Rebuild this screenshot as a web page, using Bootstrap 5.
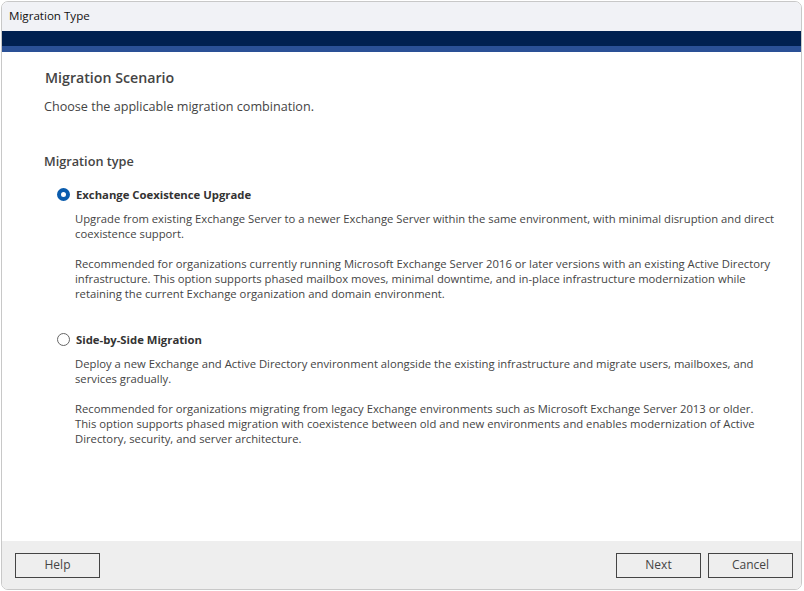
<!DOCTYPE html>
<html lang="en">
<head>
  <meta charset="UTF-8" />
  <meta name="viewport" content="width=device-width, initial-scale=1.0" />
  <title>Migration Type</title>
  <link href="https://cdn.jsdelivr.net/npm/bootstrap@5.3.3/dist/css/bootstrap.min.css" rel="stylesheet">
  <style>
    html, body { height: 100%; }
    body { background: #fff; font-family: "Open Sans", "Noto Sans", sans-serif; color: #444; overflow: hidden; padding: 1px 0 0 1px; }
    .wiz-window { width: 801px; height: 589px; border: 1px solid #c8c8c8; border-radius: 7px; overflow: hidden; }
    .wiz-title { height: 29px; background: #f1f2f6; padding: 0 0 2px 7px; font-size: 11.6px; color: #111; }
    .wiz-band { height: 15px; background: #002050; flex-shrink: 0; }
    .wiz-band2 { height: 6px; background: #2a5096; flex-shrink: 0; }
    .wiz-body { padding: 16px 24px 0 42px; }
    .wiz-heading { font-size: 14.2px; font-weight: 600; margin: 0 0 0 1px; line-height: 20px; color: #444; }
    .wiz-sub { font-size: 12.6px; margin: 10px 0 0; line-height: 18px; }
    .wiz-group { font-size: 12.7px; font-weight: 600; margin: 36px 0 0; line-height: 18px; }
    .wiz-opt { position: relative; padding-left: 31px; }
    .wiz-opt-first { margin-top: 17px; }
    .wiz-opt-second { margin-top: 31px; }
    .wiz-opt-title { font-size: 11.3px; font-weight: 700; line-height: 16px; color: #333; padding-left: 1px; }
    .wiz-opt p { font-size: 11.28px; line-height: 15px; margin: 0; }
    .wiz-opt .wiz-para2 { margin-top: 15px; }
    .wiz-radio { width: 13px; height: 13px; border-radius: 50%; border: 1px solid #666; background: #fff; position: absolute; left: 13px; top: 1px; margin: 0; }
    .wiz-radio.is-on { border: 4px solid #0b5cad; }
    .wiz-foot { height: 48px; background: #eee; padding: 0 8px 0 13px; flex-shrink: 0; }
    .wiz-btn { height: 25px; width: 85px; border: 1px solid #444; background: #eee; font-size: 12px; color: #444; padding: 0; border-radius: 0; }
    .wiz-btns { gap: 7px; }
  </style>
</head>
<body>
<div class="wiz-window d-flex flex-column">
  <div class="wiz-title d-flex align-items-center flex-shrink-0">Migration Type</div>
  <div class="wiz-band"></div>
  <div class="wiz-band2"></div>

  <div class="wiz-body flex-grow-1">
    <h1 class="wiz-heading">Migration Scenario</h1>
    <p class="wiz-sub">Choose the applicable migration combination.</p>
    <p class="wiz-group">Migration type</p>

    <div class="wiz-opt wiz-opt-first">
      <span class="wiz-radio is-on"></span>
      <div class="wiz-opt-title">Exchange Coexistence Upgrade</div>
      <p class="mt-2">Upgrade from existing Exchange Server to a newer Exchange Server within the same environment, with minimal disruption and direct coexistence support.</p>
      <p class="wiz-para2">Recommended for organizations currently running Microsoft Exchange Server 2016 or later versions with an existing Active Directory infrastructure. This option supports phased mailbox moves, minimal downtime, and in-place infrastructure modernization while retaining the current Exchange organization and domain environment.</p>
    </div>

    <div class="wiz-opt wiz-opt-second">
      <span class="wiz-radio"></span>
      <div class="wiz-opt-title">Side-by-Side Migration</div>
      <p class="mt-2">Deploy a new Exchange and Active Directory environment alongside the existing infrastructure and migrate users, mailboxes, and services gradually.</p>
      <p class="wiz-para2">Recommended for organizations migrating from legacy Exchange environments such as Microsoft Exchange Server 2013 or older. This option supports phased migration with coexistence between old and new environments and enables modernization of Active Directory, security, and server architecture.</p>
    </div>
  </div>

  <div class="wiz-foot d-flex align-items-center justify-content-between">
    <button class="wiz-btn" type="button">Help</button>
    <div class="wiz-btns d-flex">
      <button class="wiz-btn" type="button">Next</button>
      <button class="wiz-btn" type="button">Cancel</button>
    </div>
  </div>
</div>
</body>
</html>
